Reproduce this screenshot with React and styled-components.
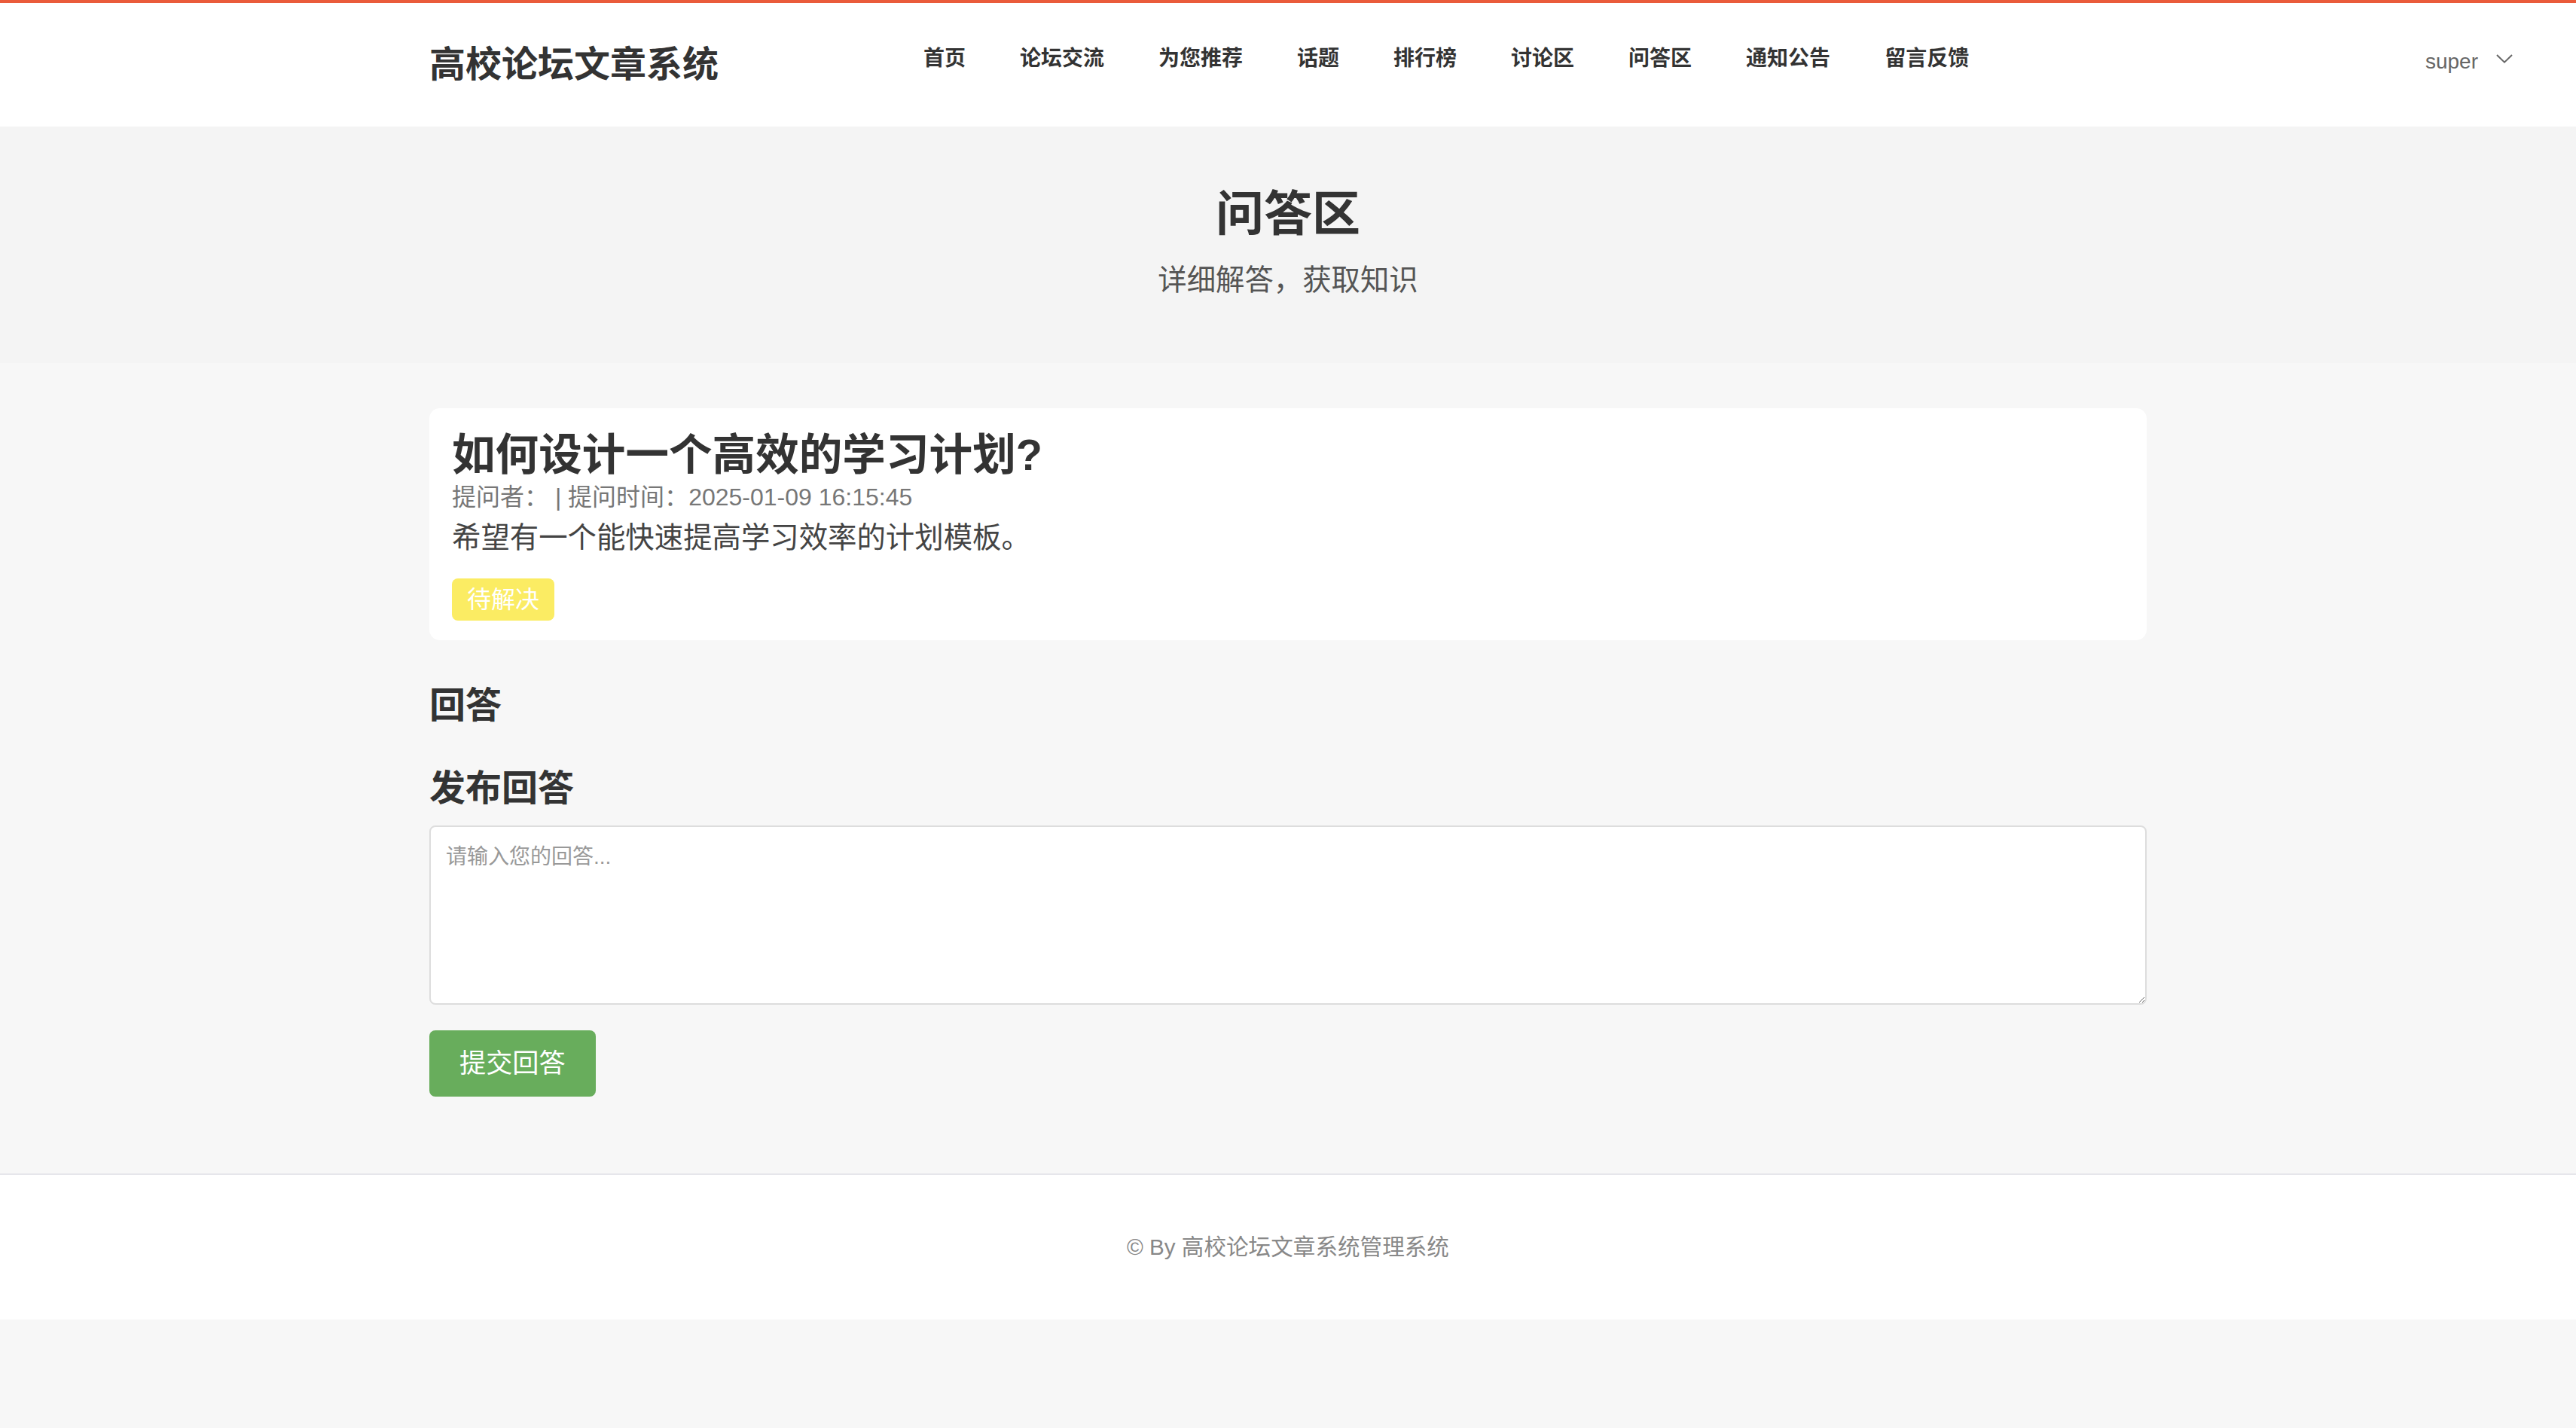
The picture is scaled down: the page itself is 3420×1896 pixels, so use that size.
import React from 'react';
import styled, { createGlobalStyle } from 'styled-components';

const GlobalStyle = createGlobalStyle`
    html {
        zoom: 2;
    }

    body {
        margin: 0;
        background: #f7f7f7;
        font-family: "Liberation Sans", "Noto Sans CJK SC", sans-serif;
        color: #333;
    }

    * {
        box-sizing: border-box;
    }
`;

const Header = styled.header`
    display: grid;
    grid-template-columns: 1fr 1140px 1fr;
    height: 84px;
    background: #fff;
    border-top: 2px solid #ea5b3b;
`;

const HeaderInner = styled.div`
    grid-column: 2;
    display: flex;
    align-items: center;
`;

const Logo = styled.div`
    width: 310px;
    font-size: 24px;
    font-weight: 700;
    color: #333;
    line-height: 30px;
`;

const Nav = styled.nav`
    display: flex;
    align-self: flex-start;
    padding-top: 27px;
`;

const NavItem = styled.a`
    padding: 0 18px;
    font-size: 14px;
    line-height: 20px;
    font-weight: 700;
    color: #333;
    text-decoration: none;
    cursor: pointer;
`;

const UserMenu = styled.div`
    grid-column: 3;
    justify-self: end;
    display: flex;
    align-items: center;
    gap: 12px;
    padding: 29px 42px 0 0;
    height: fit-content;
    font-size: 14px;
    line-height: 20px;
    color: #666;
    cursor: pointer;

    svg {
        margin-top: -4px;
    }
`;

const Hero = styled.section`
    background: #f4f4f4;
    padding: 38px 0 41px;
    text-align: center;
`;

const HeroTitle = styled.h1`
    margin: 0;
    font-size: 32px;
    line-height: 40px;
    font-weight: 700;
    color: #333;
`;

const HeroSub = styled.p`
    margin: 10px 0 0;
    font-size: 19.2px;
    line-height: 28px;
    color: #555;
`;

const Main = styled.main`
    width: 1140px;
    margin: 0 auto;
    padding: 30px 0 51px;
`;

const QuestionCard = styled.div`
    background: #fff;
    border-radius: 7px;
    padding: 14px 15px 13px;
`;

const QuestionTitle = styled.h2`
    margin: 0;
    font-size: 28.8px;
    line-height: 34px;
    font-weight: 700;
    color: #333;
`;

const Meta = styled.div`
    font-size: 16px;
    line-height: 22px;
    color: #777;
`;

const Desc = styled.p`
    margin: 2px 0 0;
    font-size: 19.2px;
    line-height: 28px;
    color: #444;
`;

const Badge = styled.span`
    display: inline-block;
    margin-top: 13px;
    padding: 0 10px;
    height: 28px;
    line-height: 28px;
    font-size: 16px;
    color: #fff;
    background: ${({ tone }) => (tone === 'done' ? '#67ad5b' : '#fbec63')};
    border-radius: 4px;
`;

const SectionTitle = styled.h3`
    margin: ${({ gap }) => gap}px 0 0;
    font-size: 24px;
    line-height: 29px;
    font-weight: 700;
    color: #333;
`;

const AnswerInput = styled.textarea`
    display: block;
    width: 100%;
    height: 119px;
    margin-top: 10px;
    padding: 10px;
    font-family: "Liberation Sans", "Noto Sans CJK SC", sans-serif;
    font-size: 14px;
    line-height: 20px;
    color: #333;
    background: #fff;
    border: 1px solid #ddd;
    border-radius: 4px;
    outline: none;

    &::placeholder {
        color: #999;
    }
`;

const SubmitButton = styled.button`
    display: block;
    margin-top: 17px;
    padding: 10px 20px;
    font-family: "Liberation Sans", "Noto Sans CJK SC", sans-serif;
    font-size: 17.6px;
    line-height: 24px;
    color: #fff;
    background: #68ad5c;
    border: none;
    border-radius: 4px;
    cursor: pointer;
`;

const Footer = styled.footer`
    height: 97px;
    background: #fff;
    border-top: 1px solid #e6e6eb;
    text-align: center;
    font-size: 14.8px;
    line-height: 96px;
    color: #888;
`;

const navLinks = ['首页', '论坛交流', '为您推荐', '话题', '排行榜', '讨论区', '问答区', '通知公告', '留言反馈'];

const question = {
    title: '如何设计一个高效的学习计划?',
    asker: '',
    time: '2025-01-09 16:15:45',
    content: '希望有一个能快速提高学习效率的计划模板。',
    solved: false,
};

const App = () => {
    return (
        <>
            <GlobalStyle />
            <Header>
                <HeaderInner>
                    <Logo>高校论坛文章系统</Logo>
                    <Nav>
                        {navLinks.map((link) => (
                            <NavItem key={link}>{link}</NavItem>
                        ))}
                    </Nav>
                </HeaderInner>
                <UserMenu>
                    <span>super</span>
                    <svg width="11" height="6" viewBox="0 0 11 6" fill="none">
                        <polyline points="0.5,0.5 5.5,5.3 10.5,0.5" stroke="#666" strokeWidth="1" />
                    </svg>
                </UserMenu>
            </Header>

            <Hero>
                <HeroTitle>问答区</HeroTitle>
                <HeroSub>详细解答，获取知识</HeroSub>
            </Hero>

            <Main>
                <QuestionCard>
                    <QuestionTitle>{question.title}</QuestionTitle>
                    <Meta>提问者：{question.asker} | 提问时间：{question.time}</Meta>
                    <Desc>{question.content}</Desc>
                    <Badge tone={question.solved ? 'done' : 'pending'}>{question.solved ? '已解决' : '待解决'}</Badge>
                </QuestionCard>

                <SectionTitle gap={29}>回答</SectionTitle>

                <SectionTitle gap={26}>发布回答</SectionTitle>
                <AnswerInput placeholder="请输入您的回答..." />
                <SubmitButton>提交回答</SubmitButton>
            </Main>

            <Footer>© By 高校论坛文章系统管理系统</Footer>
        </>
    );
};

export default App;
